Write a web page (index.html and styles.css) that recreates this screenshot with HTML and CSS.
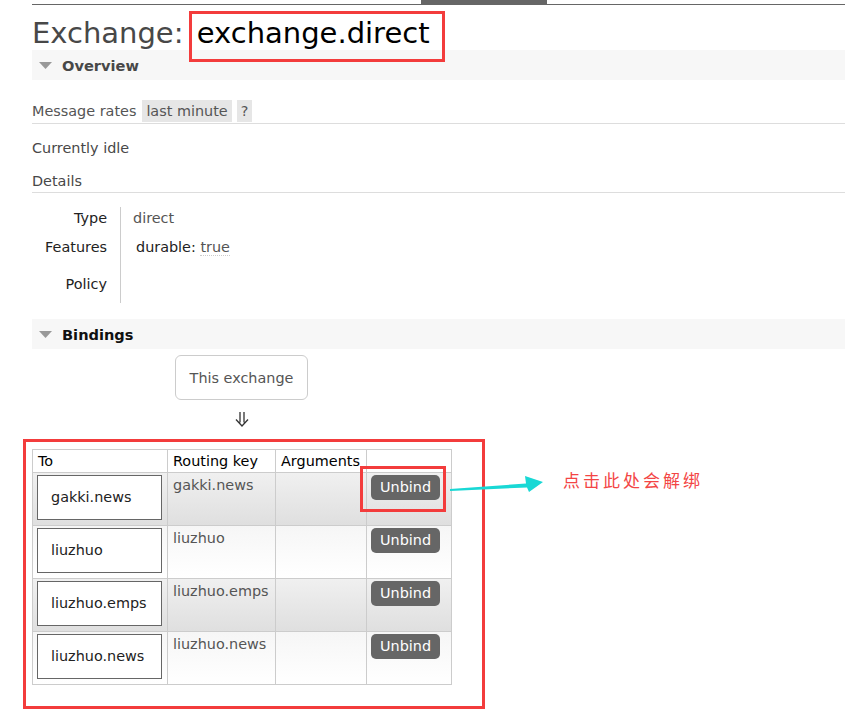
FILE: index.html
```html
<!DOCTYPE html>
<html>
<head>
<meta charset="utf-8">
<title>Exchange: exchange.direct</title>
<link rel="stylesheet" href="styles.css">
</head>
<body>
<div class="page">
  <div class="topnav"><span class="tab"></span></div>
  <h1 class="title">Exchange: <span class="name">exchange.direct</span></h1>

  <div class="bar">
    <svg class="tri" viewBox="0 0 13 7"><polygon points="0,0 13,0 6.5,7" fill="#999"/></svg>
    <span class="bar-label overview">Overview</span>
  </div>

  <div class="rates">
    <span>Message rates</span>
    <span class="chip chip-first">last minute</span>
    <span class="chip">?</span>
  </div>
  <p class="idle">Currently idle</p>
  <h3 class="details-h">Details</h3>
  <div class="details">
    <div class="dl">Type</div><div class="dv">direct</div>
    <div class="dl">Features</div><div class="dv"><span class="feat">durable: <span class="abbr">true</span></span></div>
    <div class="dl">Policy</div><div class="dv"></div>
  </div>

  <div class="bar bindings">
    <svg class="tri" viewBox="0 0 13 7"><polygon points="0,0 13,0 6.5,7" fill="#999"/></svg>
    <span class="bar-label">Bindings</span>
  </div>

  <div class="flow">
    <div class="this-ex">This exchange</div>
    <div class="down" aria-label="⇓">
      <svg class="down-ico" viewBox="0 0 14 15"><path d="M5 0V10.5M9 0V10.5M1 7.5L7 14L13 7.5" fill="none" stroke="#333" stroke-width="1.3"/></svg>
    </div>
  </div>

  <div class="btable">
    <div class="row head">
      <div class="cell">To</div>
      <div class="cell">Routing key</div>
      <div class="cell">Arguments</div>
      <div class="cell"></div>
    </div>
    <div class="row odd">
      <div class="cell c-to"><div class="qbox">gakki.news</div></div>
      <div class="cell c-key">gakki.news</div>
      <div class="cell"></div>
      <div class="cell c-act"><button class="btn">Unbind</button></div>
    </div>
    <div class="row even">
      <div class="cell c-to"><div class="qbox">liuzhuo</div></div>
      <div class="cell c-key">liuzhuo</div>
      <div class="cell"></div>
      <div class="cell c-act"><button class="btn">Unbind</button></div>
    </div>
    <div class="row odd">
      <div class="cell c-to"><div class="qbox">liuzhuo.emps</div></div>
      <div class="cell c-key">liuzhuo.emps</div>
      <div class="cell"></div>
      <div class="cell c-act"><button class="btn">Unbind</button></div>
    </div>
    <div class="row even">
      <div class="cell c-to"><div class="qbox">liuzhuo.news</div></div>
      <div class="cell c-key">liuzhuo.news</div>
      <div class="cell"></div>
      <div class="cell c-act"><button class="btn">Unbind</button></div>
    </div>
  </div>
</div>

<div class="mark mark-title"></div>
<div class="mark mark-table"></div>
<div class="mark mark-unbind"></div>
<svg class="pointer" viewBox="0 0 100 24"><polygon points="2,17 78,11.5 77,4 95,10 81,20 79,15.5 2,19" fill="#19d8d5"/></svg>
<div class="note">点击此处会解绑</div>
</body>
</html>
```

FILE: styles.css
```css
html, body {
  margin: 0;
  padding: 0;
  background: #fff;
}
body {
  font-family: "DejaVu Sans", Verdana, sans-serif;
  font-size: 14.4px;
  color: #484848;
  position: relative;
  min-height: 725px;
}
.page {
  padding-left: 32px;
}
.topnav {
  height: 4px;
  border-bottom: 1px solid #666;
  display: flex;
}
.tab {
  margin-left: 389px;
  width: 126px;
  background: #666;
}
.title {
  margin: 12px 0 0;
  height: 33px;
  font-size: 29px;
  line-height: 33px;
  font-weight: normal;
  color: #484848;
  white-space: nowrap;
}
.title .name {
  color: #000;
  margin-left: 4px;
}
.bar {
  height: 30px;
  background: #f7f7f7;
  display: flex;
  align-items: center;
}
.tri {
  width: 13px;
  height: 7px;
  margin-left: 7px;
  flex: none;
}
.bar-label {
  margin-left: 10px;
  font-weight: bold;
  font-size: 14.6px;
  color: #111;
}
.bar-label.overview {
  color: #484848;
}
.rates {
  margin-top: 20px;
  height: 22px;
  padding-bottom: 1px;
  border-bottom: 1px solid #ddd;
  display: flex;
  align-items: center;
  color: #555;
}
.chip {
  height: 22px;
  line-height: 22px;
  padding: 0 4px;
  background: #e6e6e6;
  color: #555;
  margin-left: 5px;
}
.chip-first {
  margin-left: 6px;
}
.idle {
  margin: 14px 0 0;
  line-height: 20px;
}
.details-h {
  margin: 13px 0 0;
  font-size: 14.4px;
  font-weight: normal;
  line-height: 20px;
  padding-bottom: 1px;
  border-bottom: 1px solid #ddd;
}
.details {
  margin-top: 14px;
  display: grid;
  grid-template-columns: 88px 1fr;
  grid-template-rows: 29px 37px 30px;
}
.dl {
  text-align: right;
  padding: 1px 13px 0 0;
  line-height: 20px;
  color: #222;
}
.dv {
  border-left: 1px solid #ccc;
  padding: 1px 0 0 12px;
  line-height: 20px;
  color: #555;
}
.feat {
  margin-left: 3px;
  color: #222;
}
.abbr {
  color: #555;
  border-bottom: 1px dotted #ccc;
}
.bindings {
  margin-top: 16px;
}
.flow {
  margin-top: 6px;
  padding-left: 143px;
}
.this-ex {
  width: 133px;
  box-sizing: border-box;
  border: 1px solid #ccc;
  border-radius: 6px;
  padding: 12px 0 11px;
  line-height: 20px;
  text-align: center;
  color: #555;
}
.down {
  width: 133px;
  height: 15px;
  margin-top: 12px;
  display: flex;
  justify-content: center;
}
.down-ico {
  width: 14px;
  height: 15px;
  margin-left: 1px;
}
.btable {
  margin-top: 22px;
  display: grid;
  grid-template-columns: 135px 108px 91px 85px;
  grid-template-rows: 23px repeat(4, 53px);
  width: max-content;
  border-left: 1px solid #ccc;
  border-top: 1px solid #ccc;
}
.row {
  display: contents;
}
.cell {
  box-sizing: border-box;
  border-right: 1px solid #ccc;
  border-bottom: 1px solid #ccc;
  line-height: 20px;
}
.head .cell {
  padding: 1px 5px 0;
  color: #000;
  background: #fff;
}
.odd .cell {
  background: linear-gradient(#f0f0f0, #dfdfdf);
}
.even .cell {
  background: linear-gradient(#f6f6f6, #fff);
}
.c-to {
  padding: 2px 4px;
}
.qbox {
  width: 125px;
  height: 45px;
  box-sizing: border-box;
  border: 1px solid #666;
  background: #fff;
  padding-left: 13px;
  line-height: 43px;
  color: #222;
  white-space: nowrap;
}
.c-key {
  padding: 2px 5px;
  color: #555;
}
.c-act {
  padding: 2px 4px;
}
.btn {
  display: block;
  height: 25px;
  padding: 0 9px;
  border: 0;
  border-radius: 5px;
  background: #666;
  color: #fff;
  font-family: inherit;
  font-size: 14.4px;
  line-height: 25px;
  cursor: pointer;
}
.mark {
  position: absolute;
  box-sizing: border-box;
  border: 3px solid #f33c3c;
}
.mark-title {
  left: 189px;
  top: 11px;
  width: 256px;
  height: 51px;
}
.mark-table {
  left: 23px;
  top: 439px;
  width: 462px;
  height: 270px;
}
.mark-unbind {
  left: 360px;
  top: 466px;
  width: 86px;
  height: 46px;
}
.pointer {
  position: absolute;
  left: 448px;
  top: 472px;
  width: 100px;
  height: 24px;
}
.note {
  position: absolute;
  left: 563px;
  top: 470px;
  font-family: "Noto Sans CJK SC", sans-serif;
  font-size: 17px;
  letter-spacing: 3px;
  line-height: 20px;
  color: #f34545;
  white-space: nowrap;
}
```
